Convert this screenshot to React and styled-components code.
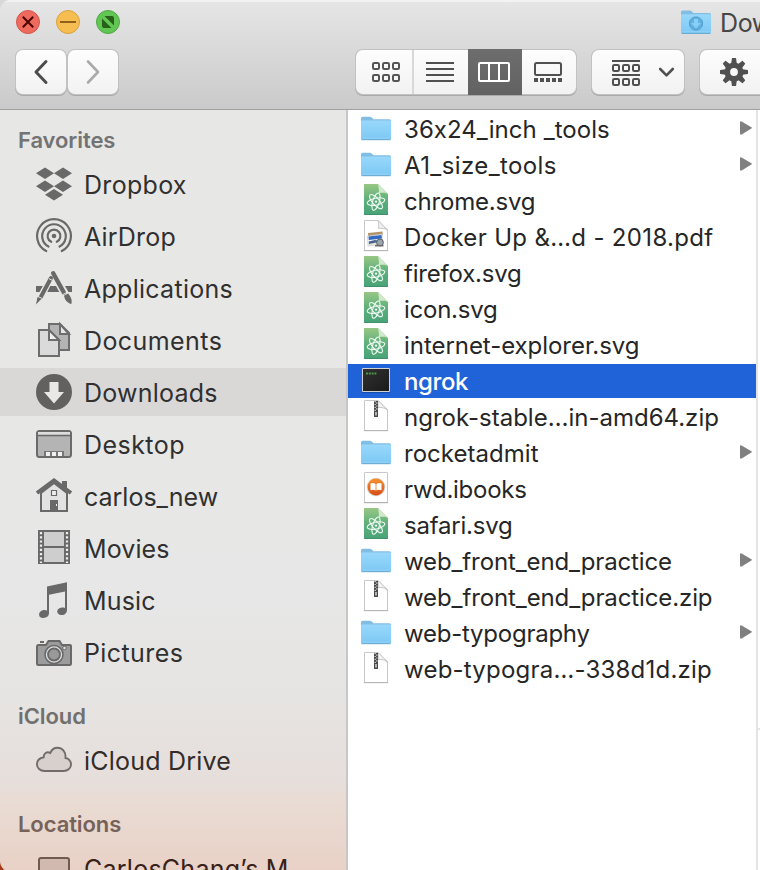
import React from "react";
import styled, { createGlobalStyle, css } from "styled-components";

const GlobalStyle = createGlobalStyle`
  html, body { margin: 0; padding: 0; overflow: hidden; }
  body { background: linear-gradient(#d8d8d8 0 50%, #a83c18 50%); height: 870px; }
  * { box-sizing: border-box; }
`;

const Viewport = styled.div`
  width: 760px;
  height: 870px;
  overflow: hidden;
  font-family: Inter, "Noto Sans", sans-serif;
  font-feature-settings: "calt" 0;
  color: #272727;
`;

const Window = styled.div`
  display: flex;
  flex-direction: column;
  width: 760px;
  height: 872px;
  overflow: hidden;
  border-radius: 10px 0 0 11px;
`;

const TitleBar = styled.header`
  flex: none;
  height: 110px;
  background: linear-gradient(#e6e6e6, #cacaca);
  border-bottom: 1px solid #a0a0a0;
  box-shadow: inset 0 2px 0 #f2f2f2;
  display: flex;
  flex-direction: column;
`;

const TitleRow = styled.div`
  height: 50px;
  display: flex;
  justify-content: space-between;
  padding-left: 16px;
`;

const Lights = styled.div`
  display: flex;
  gap: 16px;
  padding-top: 10px;
`;

const Light = styled.span`
  display: block;
  width: 24px;
  height: 24px;
  border-radius: 50%;
  background: ${(p) => p.$fill};
  border: 1px solid ${(p) => p.$edge};
  svg { display: block; margin: -1px; }
`;

const Title = styled.div`
  width: 80px;
  flex: none;
  display: flex;
  gap: 8px;
  padding-top: 9px;
  font-size: 25px;
  line-height: 28px;
  letter-spacing: -0.4px;
  color: #464646;
  overflow: hidden;
  white-space: nowrap;
  svg { flex: none; }
`;

const Tools = styled.div`
  display: flex;
  padding-left: 16px;
  width: 800px;
`;

const Button = styled.button`
  flex: none;
  appearance: none;
  display: block;
  padding: 0;
  width: ${(p) => p.$width}px;
  height: 44px;
  margin-left: ${(p) => p.$gap || 0}px;
  border: 0;
  border-radius: 7px;
  background: linear-gradient(#fdfdfd, #f2f2f2);
  box-shadow: 0 0 0 1px #c2c2c2, 0 1px 0 1px #a9a9a9;
  svg { display: block; }
`;

const Segments = styled.div`
  flex: none;
  display: flex;
  align-items: center;
  width: 220px;
  height: 44px;
  margin-left: 238px;
  border-radius: 7px;
  background: linear-gradient(#fdfdfd, #f2f2f2);
  box-shadow: 0 0 0 1px #c2c2c2, 0 1px 0 1px #a9a9a9;
`;

const Segment = styled.span`
  width: ${(p) => p.$width}px;
  height: 44px;
  ${(p) => p.$divided && css`border-right: 2px solid #d8d8d8;`}
  ${(p) => p.$active && css`
    height: 46px;
    padding-top: 1px;
    background: linear-gradient(#6d6d6d, #626262);
  `}
  svg { display: block; }
`;

const Content = styled.div`
  flex: 1;
  min-height: 0;
  display: flex;
`;

const Sidebar = styled.nav`
  width: 348px;
  flex: none;
  border-right: 2px solid #c9c7c6;
  overflow: hidden;
  background: linear-gradient(#e7e7e5 0, #e7e7e7 480px, #e6e4e2 590px, #e6dedb 670px, #e9dcd4 690px, #e9d1c6 762px);
`;

const Heading = styled.h2`
  margin: ${(p) => p.$top}px 0 0 18px;
  height: 28px;
  font-size: 22px;
  line-height: 28px;
  font-weight: 600;
  letter-spacing: -0.08px;
  color: ${(p) => p.$color || "#737373"};
`;

const Items = styled.div`
  margin-top: 6px;
  display: grid;
  gap: 4px;
`;

const Item = styled.div`
  height: 48px;
  padding-left: 34px;
  display: flex;
  align-items: center;
  gap: 10px;
  background: ${(p) => (p.$active ? "#d9d8d7" : "transparent")};
  svg { flex: none; }
`;

const Label = styled.span`
  font-size: 25px;
  line-height: 34px;
  white-space: nowrap;
  padding-top: 2px;
  letter-spacing: ${(p) => p.$track}px;
  color: ${(p) => p.$color || "#303030"};
`;

const Column = styled.main`
  width: 410px;
  flex: none;
  padding-top: 2px;
  display: flex;
  flex-direction: column;
  gap: 2px;
  background: #fff;
  border-right: 2px solid #e4e4e4;
`;

const File = styled.div`
  flex: none;
  height: 34px;
  padding: 0 3px 0 10px;
  display: flex;
  align-items: center;
  background: ${(p) => (p.$active ? "#2063d9" : "transparent")};
  svg { flex: none; }
`;

const FileName = styled.span`
  flex: 1;
  padding: 2px 0 0 10px;
  font-size: 24px;
  line-height: 32px;
  white-space: nowrap;
  letter-spacing: ${(p) => p.$track}px;
  color: ${(p) => (p.$active ? "#fff" : "#262626")};
  font-weight: ${(p) => (p.$active ? 500 : 400)};
`;

const NextColumn = styled.div`
  flex: 1;
  background: #fff;
  padding-top: 618px;
`;

const Rule = styled.div`
  height: 2px;
  background: #e7e7e7;
`;

const G = "#696969";

/* Sidebar icons, drawn on a 40x40 grid */
const Icon = ({ children }) => (
  <svg width="40" height="40" viewBox="0 0 40 40" fill="none">{children}</svg>
);

const sideIcons = {
  dropbox: (
    <g fill={G}>
      {[[11, 9.3], [29, 9.3], [11, 22.3], [29, 22.3], [20, 30.7]].map(([x, y]) => (
        <path key={x + "-" + y} d={`M${x - 9} ${y}L${x} ${y - 5.7}L${x + 9} ${y}L${x} ${y + 5.7}Z`} />
      ))}
    </g>
  ),
  airdrop: (
    <g stroke={G} strokeWidth="2.2" strokeLinecap="round">
      <circle cx="20" cy="20" r="2.3" fill={G} stroke="none" />
      <path d="M17.2 25.800A6.400 6.400 0 1 1 22.800 25.800" />
      <path d="M14.500 30.500A11.800 11.800 0 1 1 25.500 30.500" />
      <path d="M12.200 35A16.900 16.900 0 1 1 27.800 35" />
    </g>
  ),
  applications: (
    <g>
      <path d="M2 18H9L5.5 24H2ZM14.5 18H25L28.5 24H13ZM31 18H38V24H34.5Z" fill={G} />
      <path d="M19 5L8.2 27" stroke="#e7e7e5" strokeWidth="6.4" />
      <path d="M18.8 4.8L31.5 28" stroke="#e7e7e5" strokeWidth="7" />
      <path d="M17 10L6.500 29.500" stroke={G} strokeWidth="4" strokeLinecap="round" />
      <path d="M19.2 5.2L30 24.7" stroke={G} strokeWidth="4.400" strokeLinecap="round" />
      <path d="M30 27.8L34.2 25.5Q39 31 37.2 36.3Q31 34 30 27.8ZM3.5 29L7 31.3L2 36.5Z" fill={G} />
      <path d="M15 10.7L18 12.2M28.8 26.6L33.4 24M4.6 28.7L8 30.5" stroke="#e7e7e5" strokeWidth="1" />
    </g>
  ),
  documents: (
    <g stroke="#6d6d6d" strokeWidth="2">
      <path d="M15 4H26L35 13V30H15Z" fill="#b4b4b4" />
      <path d="M26 4V14H35Z" fill="#e7e7e7" />
      <path d="M5 10H15L25 20V36H5Z" fill="#dadada" />
      <path d="M15 10V20H25Z" fill="#f0f0f0" />
    </g>
  ),
  downloads: (
    <g>
      <circle cx="20" cy="20" r="18" fill="#626160" />
      <path d="M15.5 10H24.5V20H30L20 31.5L10 20H15.5Z" fill="#e9e8e7" />
    </g>
  ),
  desktop: (
    <g>
      <rect x="3" y="7" width="34" height="26" rx="2.5" fill="#b4b4b4" stroke="#6a6a6a" strokeWidth="2" />
      <path d="M4 8H36V11H4Z" fill="#dedede" />
      <path d="M4 11.5H36" stroke="#6a6a6a" strokeWidth="1.6" />
      <path d="M10 27H30V32H10Z" fill="#777" />
      <path d="M12 28H16V32H12ZM18 28H22V32H18ZM24 28H28V32H24Z" fill="#f0f0f0" />
    </g>
  ),
  home: (
    <g>
      <path d="M7 17V35H33V17L20 7Z" fill="#e2e2e2" stroke={G} strokeWidth="2" />
      <path d="M28 5H33V13H28Z" fill={G} />
      <path d="M3 17L20 4.500L37 17" stroke={G} strokeWidth="4" />
      <path d="M17.500 14.500H22.500V19.500H17.500Z" fill="#eee" stroke={G} strokeWidth="1.200" />
      <path d="M16 24H24V35H16Z" fill={G} />
      <path d="M22 28H23V30H22Z" fill="#eee" />
    </g>
  ),
  movies: (
    <g>
      <path d="M4 2H36V36H4Z" fill={G} />
      <path d="M10 4H30V18H10ZM10 20H30V34H10Z" fill="#cecece" />
      <path d="M7 4V35M33 4V35" stroke="#eee" strokeWidth="2.200" strokeDasharray="2.200 2" />
    </g>
  ),
  music: (
    <path d="M13 6.500L33 2.300V30C33 33 30.500 35.500 27 35C23 34.500 22 30.500 25 28.500C27 27.300 29 27.500 31 28V11.500L15 14.700V33C15 37 11 38.500 7.500 37.700C4 36.800 4.500 31.800 8 30.500C10 29.700 11.500 30 13 30.500Z" fill={G} />
  ),
  pictures: (
    <g>
      <path d="M6 9H10V11H6Z" fill={G} />
      <path d="M4 13H12L14.500 9H25.500L28 13H36Q37 13 37 14V32Q37 33 35.500 33H4.500Q3 33 3 31.500V14.500Q3 13 4 13Z" fill="#9c9c9c" stroke={G} strokeWidth="2" />
      <circle cx="20" cy="22.500" r="9" fill="#ddd" stroke={G} strokeWidth="1.600" />
      <circle cx="20" cy="22.500" r="6" fill="#999" stroke={G} strokeWidth="1.800" />
      <circle cx="30.500" cy="16" r="1.800" fill="#ddd" stroke={G} />
    </g>
  ),
  cloud: (
    <path d="M10.500 31H29.500C34 31 37 28 37 24.500C37 21 34.500 18.500 31.500 18C32 11.500 28 7.700 23.500 7.700C20 7.700 17.500 9.700 16.300 13C13 11 9.300 13.500 9.700 17.300C5.500 18 3 20.500 3 24.500C3 28 6 31 10.500 31Z" fill="#d8d0cd" stroke="#716c6a" strokeWidth="1.900" />
  ),
  laptop: (
    <rect x="5" y="10" width="30" height="24" rx="2" fill="#d1b9af" stroke="#6f5a51" strokeWidth="2" />
  ),
};

const FolderArt = ({ download }) => (
  <>
    <path d="M0 2Q0 .5 1.500 .5H9Q10 .5 11 1.500L12.500 3H28.500Q30 3 30 4.500V10H0Z" fill="#82bde3" />
    <rect x="0" y="4.200" width="30" height="19.300" rx="1.200" fill="url(#folderFill)" />
    <path d="M.6 21.800H29.400" stroke="#9bd7f8" strokeWidth=".7" />
    <path d="M.6 23.400H29.400" stroke="#64a5cd" strokeWidth="1" />
    {download && (
      <g>
        <circle cx="15" cy="13.500" r="6.600" fill="#63b1df" stroke="#4d9bcb" />
        <path d="M13 9H17V13H20L15 18.300L10 13H13Z" fill="#88d0f8" />
      </g>
    )}
  </>
);

const Folder = () => (
  <svg width="36" height="34" viewBox="-3 -4.300 36 34" fill="none"><FolderArt /></svg>
);

/* Sheets sit at the top of the 34px row */
const Sheet = ({ children }) => (
  <svg width="36" height="34" viewBox="0 2 36 34" fill="none">{children}</svg>
);

const Paper = ({ children }) => (
  <Sheet>
    <path d="M6.500 2.500H20L29.500 12V32.500H6.500Z" fill="#fff" stroke="#c9c9c9" />
    <path d="M6 32.700H30" stroke="#b2b2b2" />
    {children}
  </Sheet>
);

const Fold = () => <path d="M20 2.500C21 6 20.500 10.500 20.500 10.500C24 10 28 10.500 29.500 12Z" fill="#f0f0f0" stroke="#bbb" strokeWidth=".8" />;

const fileIcons = {
  folder: <Folder />,
  svg: (
    <Sheet>
      <path d="M6 2H20L30 12V33H6Z" fill="url(#atomFill)" />
      <path d="M20 2C21 6 21 11 21 11C25 10.500 28 10.500 30 12Z" fill="#cfe9cb" />
      <path d="M6.500 32.500H29.500" stroke="#3d946b" />
      <g stroke="#f1fbf5" strokeWidth="1.100">
        <ellipse cx="18" cy="19.600" rx="9" ry="3.400" transform="rotate(-12 18 19.600)" />
        <ellipse cx="18" cy="19.600" rx="9" ry="3.300" transform="rotate(48 18 19.600)" />
        <ellipse cx="18" cy="19.600" rx="9" ry="3.300" transform="rotate(107 18 19.600)" />
      </g>
      <circle cx="18" cy="19.600" r="1.200" fill="#f1fbf5" />
    </Sheet>
  ),
  pdf: (
    <Paper>
      <Fold />
      <path d="M10 15L24.500 13.500L24.800 17L10.200 19Z" fill="#b69468" />
      <path d="M9.500 18L24 16L24.500 26L10 28Z" fill="#f3f5f8" stroke="#aab3bd" strokeWidth=".5" />
      <path d="M10.500 18.500L23.500 17L24 20.500L10.800 22Z" fill="#316ac0" />
      <path d="M10.700 23.500L17 22L24 23.500V25L11 26.500Z" fill="#45648f" />
      <path d="M11 26L18 24.500L22 25.500L11 27.300Z" fill="#e8e2cd" />
      <circle cx="22" cy="24.500" r="3.400" fill="#9ba5ae" stroke="#5b5d62" />
      <path d="M17 27.700H25.500" stroke="#686868" strokeWidth="1.500" />
    </Paper>
  ),
  exec: (
    <svg width="36" height="34" viewBox="0 0 36 34" fill="none">
      <rect x="4" y="4" width="28" height="24" rx="1" fill="#d2d2d2" />
      <rect x="5" y="5" width="26" height="22" fill="url(#termFill)" />
      <path d="M8 9.500H18.500" stroke="#469a42" strokeWidth="2" strokeDasharray="2 .8" />
      <path d="M4 28.500H32" stroke="#174da8" />
    </svg>
  ),
  zip: (
    <Paper>
      <path d="M20 2.500L29.500 12C27 9.500 24 9.500 20 9.500Z" fill="#f4f4f4" stroke="#bbb" strokeWidth=".8" />
      <path d="M16 3H20V19H16Z" fill="#494949" />
      <path d="M17.200 3V13" stroke="#ddd" strokeWidth="1.200" strokeDasharray="1.200 1.700" />
      <path d="M18.800 4.500V13" stroke="#ddd" strokeWidth="1.200" strokeDasharray="1.200 1.700" />
      <path d="M17.300 14H18.700V17.500H17.300Z" fill="#ddd" />
    </Paper>
  ),
  book: (
    <Sheet>
      <path d="M6.500 2.500H29.500V32.500H6.500Z" fill="#fff" stroke="#c9c9c9" />
      <path d="M6 32.700H30" stroke="#aaa" />
      <circle cx="18" cy="17" r="9.300" fill="#d9d5d3" />
      <circle cx="18" cy="17" r="8.400" fill="url(#bookFill)" />
      <path d="M12.500 13.500Q15.500 12.500 17.600 13.900V20.500Q15.500 19.300 12.500 20.300ZM18.400 13.900Q20.500 12.500 23.500 13.500V20.300Q20.500 19.300 18.400 20.500Z" fill="#fff" />
    </Sheet>
  ),
};

/* icon, label, letter spacing */
const favorites = [
  ["dropbox", "Dropbox", 0.3],
  ["airdrop", "AirDrop", 0.2],
  ["applications", "Applications", 0.27],
  ["documents", "Documents", 0.42],
  ["downloads", "Downloads", 0.24],
  ["desktop", "Desktop", 0.45],
  ["home", "carlos_new", 0],
  ["movies", "Movies", 0.1],
  ["music", "Music", 0.15],
  ["pictures", "Pictures", 0.4],
];

const files = [
  ["folder", "36x24_inch _tools", 0.06],
  ["folder", "A1_size_tools", 0.4],
  ["svg", "chrome.svg", -0.2],
  ["pdf", "Docker Up &…d - 2018.pdf", 0.33],
  ["svg", "firefox.svg", -0.2],
  ["svg", "icon.svg", -0.25],
  ["svg", "internet-explorer.svg", -0.05],
  ["exec", "ngrok", -0.4],
  ["zip", "ngrok-stable…in-amd64.zip", 0],
  ["folder", "rocketadmit", 0.03],
  ["book", "rwd.ibooks", -0.25],
  ["svg", "safari.svg", -0.22],
  ["folder", "web_front_end_practice", -0.12],
  ["zip", "web_front_end_practice.zip", -0.11],
  ["folder", "web-typography", -0.24],
  ["zip", "web-typogra…-338d1d.zip", 0.22],
];

const Gradients = () => (
  <defs>
    <linearGradient id="folderFill" x1="0" y1="0" x2="0" y2="1"><stop stopColor="#98d8fb" /><stop offset="1" stopColor="#7cc8f4" /></linearGradient>
    <linearGradient id="atomFill" x1="0" y1="0" x2="0" y2="1"><stop stopColor="#97c784" /><stop offset=".5" stopColor="#5fb07b" /><stop offset="1" stopColor="#48a277" /></linearGradient>
    <linearGradient id="termFill" x1="0" y1="0" x2="1" y2="1"><stop stopColor="#303030" /><stop offset="1" stopColor="#1b1b1b" /></linearGradient>
    <linearGradient id="bookFill" x1="0" y1="0" x2="0" y2="1"><stop stopColor="#f6912d" /><stop offset="1" stopColor="#d64d18" /></linearGradient>
  </defs>
);

const squares = (xs, ys, s) =>
  ys.flatMap((y) => xs.map((x) => <rect key={x + "-" + y} x={x} y={y} width={s} height={s} rx="1.300" />));

const teeth = [0, 45, 90, 135, 180, 225, 270, 315];

export default function App() {
  return (
    <Viewport>
      <GlobalStyle />
      <Window>
        <TitleBar>
          <TitleRow>
            <Lights>
              <Light $fill="#ee6a5f" $edge="#d5574c">
                <svg width="24" height="24" fill="none"><path d="M6.800 6.800L17.200 17.200M17.200 6.800L6.800 17.200" stroke="#4d0502" strokeWidth="2" /></svg>
              </Light>
              <Light $fill="#f6be50" $edge="#d9a13d">
                <svg width="24" height="24" fill="none"><path d="M4 12H20" stroke="#915f1b" strokeWidth="2" /></svg>
              </Light>
              <Light $fill="#62c655" $edge="#51a844">
                <svg width="24" height="24"><path d="M8.500 6H16Q18 6 18 8V15.500ZM6 8.500V16Q6 18 8 18H15.500Z" fill="#286017" /></svg>
              </Light>
            </Lights>
            <Title>
              <svg width="32" height="28" viewBox="-1 -1 32 28" fill="none">
                <Gradients />
                <FolderArt download />
              </svg>
              Downloads
            </Title>
          </TitleRow>
          <Tools>
            <Button $width={50} aria-label="Back">
              <svg width="50" height="44" fill="none"><path d="M30 11.500L20 22L30 32.500" stroke="#4d4d4d" strokeWidth="3" strokeLinecap="round" strokeLinejoin="round" /></svg>
            </Button>
            <Button $width={50} $gap={2} aria-label="Forward">
              <svg width="50" height="44" fill="none"><path d="M20 11.500L30 22L20 32.500" stroke="#aaa" strokeWidth="2.600" strokeLinecap="round" strokeLinejoin="round" /></svg>
            </Button>
            <Segments>
              <Segment $width={58} $divided>
                <svg width="56" height="44" fill="none" stroke="#555" strokeWidth="2">{squares([17, 27, 37], [13, 25], 6)}</svg>
              </Segment>
              <Segment $width={54}>
                <svg width="54" height="44" fill="none"><path d="M12 13H40M12 19H40M12 25H40M12 31H40" stroke="#505050" strokeWidth="2" /></svg>
              </Segment>
              <Segment $width={54} $active>
                <svg width="54" height="44" fill="none" stroke="#fff" strokeWidth="2"><rect x="11" y="13" width="30" height="18" rx="1" /><path d="M21 13V31M31 13V31" /></svg>
              </Segment>
              <Segment $width={54}>
                <svg width="54" height="44" fill="none"><rect x="13" y="13" width="26" height="12" rx="1.500" stroke="#505050" strokeWidth="2" /><path d="M12 30H41" stroke="#505050" strokeWidth="4" strokeDasharray="4 2" /></svg>
              </Segment>
            </Segments>
            <Button $width={92} $gap={16} aria-label="Arrange">
              <svg width="92" height="44" fill="none" stroke="#505050" strokeWidth="2">
                <path d="M20 11H48M20 25H48" />
                {squares([21, 31, 41], [15, 29], 6)}
                <path d="M68.200 19L74.500 25.300L80.800 19" strokeWidth="2.600" strokeLinecap="round" strokeLinejoin="round" />
              </svg>
            </Button>
            <Button $width={110} $gap={16} aria-label="Actions">
              <svg width="110" height="44" fill="none">
                {teeth.map((a) => <path key={a} d="M31.900 8.500Q31.900 8 32.500 8H35.500Q36.100 8 36.100 8.500L37 15H31Z" fill="#505050" transform={`rotate(${a} 34 22)`} />)}
                <circle cx="34" cy="22" r="6.700" stroke="#505050" strokeWidth="5.600" />
              </svg>
            </Button>
          </Tools>
        </TitleBar>
        <Content>
          <Sidebar>
            <Heading $top={16}>Favorites</Heading>
            <Items>
              {favorites.map(([icon, name, track]) => (
                <Item key={name} $active={icon === "downloads"}>
                  <Icon>{sideIcons[icon]}</Icon>
                  <Label $track={track}>{name}</Label>
                </Item>
              ))}
            </Items>
            <Heading $top={26} $color="#72706f">iCloud</Heading>
            <Items>
              <Item>
                <Icon>{sideIcons.cloud}</Icon>
                <Label $track={0.22} $color="#322c2a">iCloud Drive</Label>
              </Item>
            </Items>
            <Heading $top={26} $color="#766259">Locations</Heading>
            <Items>
              <Item>
                <Icon>{sideIcons.laptop}</Icon>
                <Label $track={0.25} $color="#382118">CarlosChang’s M</Label>
              </Item>
            </Items>
          </Sidebar>
          <Column>
            {files.map(([icon, name, track]) => (
              <File key={name} $active={icon === "exec"}>
                {fileIcons[icon]}
                <FileName $track={track} $active={icon === "exec"}>{name}</FileName>
                {icon === "folder" && (
                  <svg width="13" height="16" viewBox="1 .8 13 16"><path d="M1 2.200Q1 .5 2.600 1.300L12.400 7Q13.400 7.700 12.400 8.400L2.600 14.200Q1 15 1 13.300Z" fill="#808080" /></svg>
                )}
              </File>
            ))}
          </Column>
          <NextColumn><Rule /></NextColumn>
        </Content>
      </Window>
    </Viewport>
  );
}
